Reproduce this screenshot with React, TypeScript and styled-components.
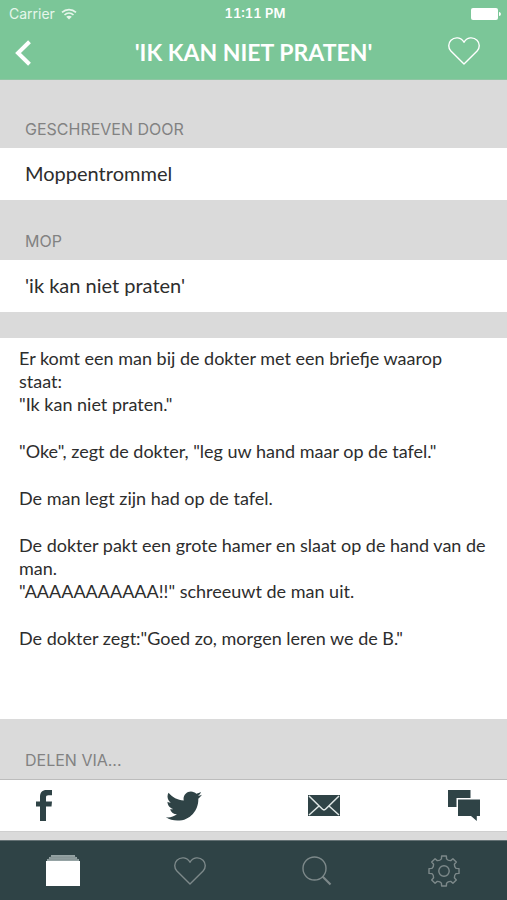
import React from "react";
import styled, { createGlobalStyle } from "styled-components";
import { FaTwitter } from "react-icons/fa";

const green = "#7bc698";
const slate = "#2f4346";
const grey = "#dadada";

const GlobalStyle = createGlobalStyle`
  * { box-sizing: border-box; }
  body { margin: 0; background: ${grey}; }
  button { font: inherit; }
`;

const Screen = styled.div`
  min-height: 100vh;
  display: flex;
  flex-direction: column;
  background: ${grey};
  color: #2d2d2d;
  font-family: Lato, "Open Sans", sans-serif;
`;

const Header = styled.header`
  background: ${green};
  color: #fff;
  border-bottom: 1px solid #8fc5a3;
`;

const StatusBar = styled.div`
  display: grid;
  grid-template-columns: 1fr auto 1fr;
  align-items: center;
  height: 27px;
  padding: 0 6px 0 9px;
  font: 14px/27px Inter, sans-serif;
`;

const Carrier = styled.span`
  display: flex;
  align-items: center;
  gap: 6px;
  color: #e6f6eb;
`;

const Clock = styled.time`
  font-size: 13px;
  font-weight: 600;
  font-variant-numeric: tabular-nums;
`;

const Battery = styled.svg`
  justify-self: end;
`;

const NavBar = styled.div`
  display: grid;
  grid-template-columns: 48px 1fr 48px;
  align-items: center;
  height: 52px;
  padding: 0 21px 0 8px;
`;

const Title = styled.h1`
  margin: 0;
  padding: 0 0 2px 13px;
  text-align: center;
  font-size: 23px;
  line-height: 28px;
  font-weight: 700;
`;

const IconButton = styled.button<{ $end?: boolean }>`
  display: flex;
  align-items: center;
  align-self: ${(p) => (p.$end ? "start" : "center")};
  justify-content: ${(p) => (p.$end ? "flex-end" : "flex-start")};
  height: 48px;
  padding: 0 6px;
  border: 0;
  background: none;
  color: inherit;
  cursor: pointer;
`;

const Main = styled.main`
  flex: 1;
  display: flex;
  flex-direction: column;
`;

const SectionLabel = styled.h2<{ $first?: boolean }>`
  margin: 0;
  padding: ${(p) => (p.$first ? "39px" : "31px")} 25px 9px;
  color: #828282;
  font: 400 16px/20px Inter, sans-serif;
`;

const Field = styled.p`
  margin: 0;
  padding: 11px 25px 13px;
  background: #fff;
  font-size: 20px;
  line-height: 28px;
`;

const Joke = styled.article`
  flex: 1;
  margin-top: 26px;
  padding: 9px 19px 68px;
  background: #fff;
  font-size: 18px;
  line-height: 23px;

  p {
    margin: 0;
    white-space: pre-line;
  }
  p + p {
    margin-top: 24px;
  }
`;

const ShareBar = styled.div`
  display: flex;
  align-items: center;
  justify-content: space-between;
  height: 53px;
  margin-bottom: 8px;
  padding: 0 25px 0 26px;
  background: #fff;
  border-top: 1px solid #bcbcbc;
  border-bottom: 1px solid #cfcfcf;
  color: ${slate};
`;

const ShareButton = styled.button`
  display: flex;
  align-items: center;
  justify-content: center;
  width: 36px;
  height: 44px;
  padding: 0;
  border: 0;
  background: none;
  color: inherit;
  cursor: pointer;
`;

const TabBar = styled.nav`
  display: grid;
  grid-template-columns: repeat(4, 1fr);
  height: 60px;
  background: ${slate};
  border-top: 1px solid #647174;
`;

const Tab = styled.a<{ $active?: boolean }>`
  display: flex;
  align-items: center;
  justify-content: center;
  color: ${(p) => (p.$active ? "#fff" : "#7d898a")};
`;

const HeartIcon = () => (
  <svg width="32" height="28" viewBox="0 0 32 28" fill="none" stroke="currentColor" strokeWidth="1.4" strokeLinejoin="round" aria-hidden="true">
    <path d="M16 27 2.900 14.100C-.1 10.800.2 6 3 3.200 6.600-.3 13.200-.1 16 5.300 18.800-.1 25.400-.3 29 3.200c2.800 2.800 3.100 7.600.1 10.900Z" />
  </svg>
);

const WifiIcon = () => (
  <svg width="16" height="12" viewBox="0 0 16 12" fill="none" stroke="currentColor" strokeWidth="1.7" aria-hidden="true">
    <path d="M1 4.300c4-3.700 10-3.700 14 0M3.500 7c2.600-2.400 6.400-2.400 9 0" />
    <path d="M5.200 8.700c1.600-1.400 4-1.400 5.600 0L8 11.600Z" fill="currentColor" stroke="none" />
  </svg>
);

const BackIcon = () => (
  <svg width="18" height="26" viewBox="0 0 18 26" fill="none" stroke="currentColor" strokeWidth="4" aria-hidden="true">
    <path d="M15.500 1.800 4 13l11.500 11.200" />
  </svg>
);

const FacebookIcon = () => (
  <svg width="16" height="31" viewBox="0 0 16 31" fill="currentColor" aria-hidden="true">
    <path d="M4 31V16.500H0v-5h4V7c0-4.500 2.300-7 6.500-7H16v5.300h-3.500C10.600 5.300 10 6 10 7.700v3.800h6l-.5 5H10V31Z" />
  </svg>
);

const MailIcon = () => (
  <svg width="32" height="21" viewBox="0 0 32 21" aria-hidden="true">
    <path fill="currentColor" d="M0 0h32v21H0Z" />
    <path fill="none" stroke="#dfe6e5" strokeWidth="1.500" d="m1 1 13.300 13c1.200 1.200 2.200 1.200 3.400 0L31 1M1 20l10-9m20 9-10-9" />
  </svg>
);

const ChatIcon = () => (
  <svg width="32" height="31" viewBox="0 0 32 31" fill="currentColor" aria-hidden="true">
    <path d="M0 0h22.500v8H8.500v9H0Z" />
    <path d="M10 9.500h22V26h-3.200v5L23 26H10Z" />
  </svg>
);

const StackIcon = () => (
  <svg width="34" height="31" viewBox="0 0 34 31" aria-hidden="true">
    <path fill="#95a3a4" d="M5 0h24v2h2v2h2v2H1V4h2V2h2Z" />
    <path stroke="#7c8b8c" strokeWidth=".7" d="M4 2.200h26M2 4.200h30" />
    <path fill="currentColor" d="M0 6h34v25H0Z" />
  </svg>
);

const SearchIcon = () => (
  <svg width="30" height="30" viewBox="0 0 30 30" fill="none" stroke="currentColor" aria-hidden="true">
    <circle cx="12.500" cy="12.500" r="11.500" strokeWidth="1.400" />
    <path d="m20.500 20.500 8 8" strokeWidth="2.200" />
  </svg>
);

const gearOutline = (() => {
  const point = (radius: number, degrees: number) => {
    const a = (degrees * Math.PI) / 180;
    return `${(16 + radius * Math.sin(a)).toFixed(2)} ${(16 - radius * Math.cos(a)).toFixed(2)}`;
  };
  const teeth = Array.from({ length: 8 }, (_, i) => {
    const c = i * 45;
    return `${i ? "L" : "M"}${point(12.4, c - 12)}L${point(15.2, c - 9)}L${point(15.2, c + 9)}L${point(12.4, c + 12)}Q${point(11, c + 22.5)} ${point(12.4, c + 33)}`;
  });
  return teeth.join("") + "Z";
})();

const GearIcon = () => (
  <svg width="32" height="32" viewBox="0 0 32 32" fill="none" stroke="currentColor" strokeWidth="1.400" strokeLinejoin="round" aria-hidden="true">
    <path d={gearOutline} />
    <circle cx="16" cy="16" r="5.200" />
  </svg>
);

const paragraphs = [
  'Er komt een man bij de dokter met een briefje waarop\nstaat:\n"Ik kan niet praten."',
  '"Oke", zegt de dokter, "leg uw hand maar op de tafel."',
  "De man legt zijn had op de tafel.",
  'De dokter pakt een grote hamer en slaat op de hand van de man.\n"AAAAAAAAAAA!!" schreeuwt de man uit.',
  'De dokter zegt:"Goed zo, morgen leren we de B."',
];

export default function App() {
  return (
    <Screen>
      <GlobalStyle />
      <Header>
        <StatusBar>
          <Carrier>
            Carrier
            <WifiIcon />
          </Carrier>
          <Clock>11:11 PM</Clock>
          <Battery width="30" height="12" viewBox="0 0 30 12" fill="#fff" aria-label="Batterij vol">
            <rect width="27" height="12" rx="2" />
            <path d="M28 4c2.500 0 2.500 4 0 4Z" />
          </Battery>
        </StatusBar>
        <NavBar>
          <IconButton type="button" aria-label="Terug">
            <BackIcon />
          </IconButton>
          <Title>'IK KAN NIET PRATEN'</Title>
          <IconButton type="button" aria-label="Favoriet" $end>
            <HeartIcon />
          </IconButton>
        </NavBar>
      </Header>
      <Main>
        <SectionLabel $first>GESCHREVEN DOOR</SectionLabel>
        <Field>Moppentrommel</Field>
        <SectionLabel>MOP</SectionLabel>
        <Field>'ik kan niet praten'</Field>
        <Joke>
          {paragraphs.map((text) => (
            <p key={text}>{text}</p>
          ))}
        </Joke>
        <SectionLabel>DELEN VIA...</SectionLabel>
        <ShareBar>
          <ShareButton type="button" aria-label="Facebook">
            <FacebookIcon />
          </ShareButton>
          <ShareButton type="button" aria-label="Twitter">
            <FaTwitter size={36} />
          </ShareButton>
          <ShareButton type="button" aria-label="E-mail">
            <MailIcon />
          </ShareButton>
          <ShareButton type="button" aria-label="Bericht">
            <ChatIcon />
          </ShareButton>
        </ShareBar>
      </Main>
      <TabBar>
        <Tab href="#moppen" aria-label="Moppen" $active>
          <StackIcon />
        </Tab>
        <Tab href="#favorieten" aria-label="Favorieten">
          <HeartIcon />
        </Tab>
        <Tab href="#zoeken" aria-label="Zoeken">
          <SearchIcon />
        </Tab>
        <Tab href="#instellingen" aria-label="Instellingen">
          <GearIcon />
        </Tab>
      </TabBar>
    </Screen>
  );
}
